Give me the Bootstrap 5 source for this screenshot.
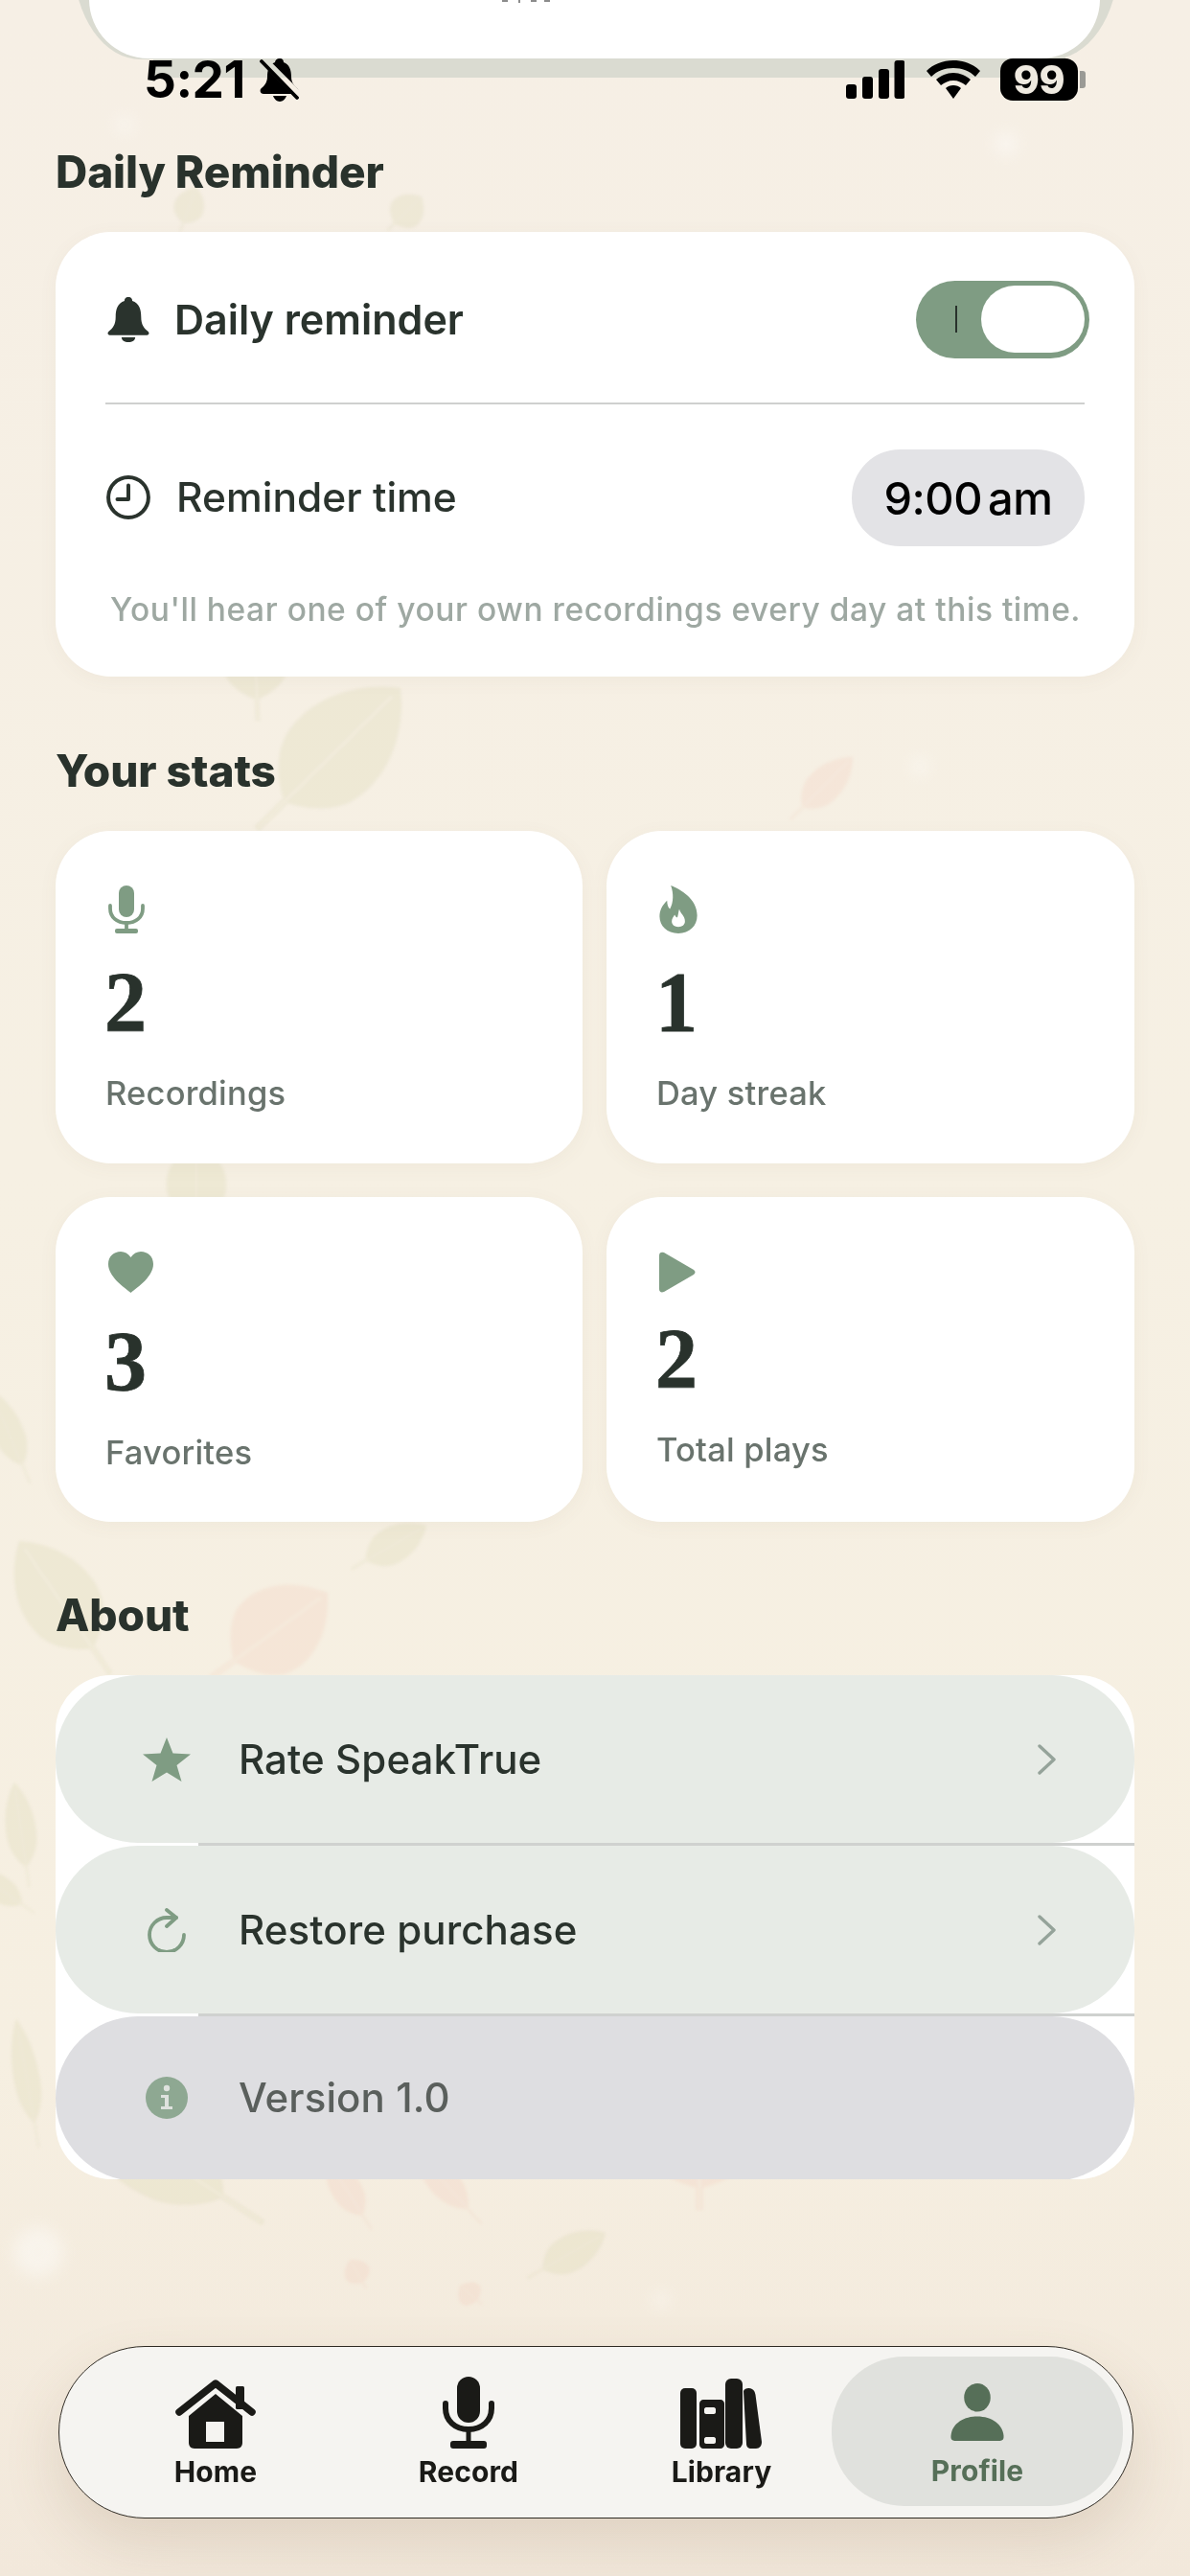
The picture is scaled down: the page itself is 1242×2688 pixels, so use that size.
<!DOCTYPE html>
<html lang="en">
<head>
<meta charset="utf-8">
<title>Profile</title>
<link rel="stylesheet" href="https://cdn.jsdelivr.net/npm/bootstrap@5.3.0/dist/css/bootstrap.min.css">
<style>
html,body{margin:0;background:#f6efe3}
body{font-family:"Inter","Liberation Sans",sans-serif;color:#2a332d}
.screen{position:relative;width:1242px;height:2688px;overflow:hidden;background:linear-gradient(180deg,#f6efe5 0%,#f6f0e3 45%,#f6efe1 80%,#f2e8db 100%);padding:0 58px}
.bg-art{position:absolute;inset:0;width:1242px;height:2688px}
.layer{position:relative}
.topzone{height:154px;position:relative;margin:0 -58px}
.sheet-back{position:absolute;left:77px;right:75px;top:-40px;height:102px;background:#dadbd1;border-radius:0 0 70px 70px/0 0 100px 100px}
.sheet-band{position:absolute;left:160px;right:130px;top:40px;height:41px;background:#dadbd1}
.sheet{position:absolute;left:93px;width:1055px;top:-60px;height:121px;background:#fff;border-radius:0 0 62px 62px}
.sheet-ink{position:absolute;left:448px;top:0;display:block}
.sbar{position:absolute;left:150px;top:58px;width:983px;height:50px}
.clock{font-size:53px;font-weight:700;line-height:50px;color:#000;letter-spacing:-.5px}
.belloff{margin-left:15px}
.wifi{margin:0 21px 0 23px}
.batt{width:81px;height:44px;background:#000;border-radius:13px;color:#efeae0;font-size:41px;font-weight:800;line-height:44px;text-align:center;letter-spacing:-.5px}
.batt-nub{width:6px;height:18px;background:#9a9a95;border-radius:0 3px 3px 0;margin-left:2px}
.sect-title{font-size:46px;font-weight:800;line-height:50px;margin:0 0 38px;color:#29322c;letter-spacing:-.1px}
.mt-sect{margin-top:73px}
.mt-about{margin-top:72px}
.rcard{background:#fff;border:0;border-radius:58px;box-shadow:0 4px 20px rgba(120,100,70,.05)}
.reminder{height:464px;padding:0 52px}
.rem-row{height:178px;padding-top:4px}
.rem-row.two{height:194px;padding-top:0}
.sep{height:2px;background:#cfd0cf}
.rem-label{font-size:43px;line-height:50px;font-weight:600;color:#2a332d}
.rem-label.med{font-size:42.500px;font-weight:550;margin-left:2px}
.w-ic{width:46px;flex:none;margin:0 25px 0 1px}
.toggle{position:relative;width:181px;height:81px;margin-right:-5px;background:#7f9c83;border-radius:41px}
.toggle-bar{position:absolute;left:41px;top:26px;width:2px;height:28px;background:#29322c}
.toggle-knob{position:absolute;right:5px;top:5px;width:108px;height:70px;background:#fff;border-radius:35px}
.timepill{width:243px;height:101px;background:#e3e3e6;border-radius:50px;font-size:47px;font-weight:500;color:#000;line-height:101px;text-align:center;letter-spacing:-.5px}
.timepill .ampm{margin-left:-6px}
.hint{font-size:33.500px;line-height:40px;font-weight:550;color:#9ea8a2;margin:0 0 0 5px;white-space:nowrap;letter-spacing:.54px}
.stats{display:grid;grid-template-columns:550px 551px;grid-template-rows:347px 339px;column-gap:25px;row-gap:35px}
.stat{padding:57px 0 0 52px}
.stat-ic{display:block;margin:0 0 29px 3px}
.stat-ic.tight{margin-bottom:26px}
.stat-num{font-family:"Liberation Serif",serif;font-size:88px;line-height:86px;font-weight:700;color:#29322c;margin:0 0 0 -1px;-webkit-text-stroke:.8px #29322c}
.stat-lab{font-size:34.500px;line-height:40px;font-weight:500;color:#69736d;margin:32px 0 0;letter-spacing:.2px}
.list{background:#fff;border-radius:58px;overflow:hidden;padding:0;margin:0;list-style:none;height:526px}
.lrow{height:175px;background:#e7ebe6;border-radius:86px;padding:0 82px 0 91px}
.lrow.ver{background:#dedee1;height:172px;padding-bottom:3px}
.lrow-line{height:3px;background:#cfd1cf;margin-left:149px}
.lrow-ic{width:50px;flex:none;margin-right:50px;display:flex;justify-content:center}
.lrow-txt{font-size:42px;line-height:50px;font-weight:550;color:#2a332d;letter-spacing:.1px}
.lrow.ver .lrow-txt{color:#5a5f5c;font-weight:500}
.tabbar{width:1122px;height:180px;margin:174px 0 0 3px;background:#f5f4f1;border:1.5px solid #2f2b24;border-radius:90px;padding:10px 10px 10px 50px;box-shadow:0 26px 60px rgba(125,95,60,.16)}
.tabgroup{gap:38px;padding-top:23px}
.tab{width:226px;text-align:center;color:#1a1a17}
.tab-ic{height:73px;display:flex;align-items:flex-end;justify-content:center}
.tab-lab{font-size:30px;line-height:36px;font-weight:700;margin-top:6px;letter-spacing:.1px}
.tab-on{width:304px;height:156px;margin-left:2px;background:#e0e1dd;border-radius:76px;color:#566f58;padding-top:28px;text-align:center}
.tab-on .tab-ic{height:60px}
.tab-on .tab-lab{margin-top:13px}
</style>
</head>
<body>
<div class="screen">
  <svg class="bg-art" viewBox="0 0 1242 2688" aria-hidden="true">
    <defs>
      <g id="lf">
        <path d="M0 0C35 30 52 75 42 115C34 140 12 155 3 160L3 200L-3 200L-3 160C-12 155-34 140-42 115C-52 75-35 30 0 0Z"/>
        <path d="M0 12V198" fill="none" stroke="#f7f1e4" stroke-width="2.500" opacity=".55"/>
      </g>
      <filter id="sft"><feGaussianBlur stdDeviation="1.500"/></filter>
      <filter id="glow"><feGaussianBlur stdDeviation="8"/></filter>
    </defs>
    <g fill="#fff" opacity=".4" filter="url(#glow)">
      <circle cx="1050" cy="150" r="12"/><circle cx="130" cy="130" r="9"/><circle cx="960" cy="800" r="9"/><circle cx="40" cy="2350" r="26"/><circle cx="690" cy="2400" r="8"/><circle cx="600" cy="2510" r="8"/>
    </g>
    <g filter="url(#sft)">
      <g fill="#c6c68c" opacity=".17">
        <use href="#lf" transform="translate(205 195) rotate(20) scale(.35 .25)"/>
        <use href="#lf" transform="translate(440 205) rotate(45) scale(.4 .25)"/>
        <use href="#lf" transform="translate(265 640) rotate(-2) scale(.75 .56)"/>
        <use href="#lf" transform="translate(418 718) rotate(45.600) scale(1.150 1.050)"/>
        <use href="#lf" transform="translate(205 1190) rotate(0) scale(.7 .5)"/>
        <use href="#lf" transform="translate(-10 1450) rotate(-23) scale(.35 .53)"/>
        <use href="#lf" transform="translate(445 1592) rotate(60) scale(.42 .45)"/>
        <use href="#lf" transform="translate(20 1608) rotate(-34.500) scale(.9 .84)"/>
        <use href="#lf" transform="translate(15 1860) rotate(-8) scale(.35 .55)"/>
        <use href="#lf" transform="translate(-30 1950) rotate(-55) scale(.3 .4)"/>
        <use href="#lf" transform="translate(17 2107) rotate(-10) scale(.3 .68)"/>
        <use href="#lf" transform="translate(60 2180) rotate(-57) scale(1 1.280)"/>
        <use href="#lf" transform="translate(632 2330) rotate(60) scale(.42 .47)"/>
      </g>
      <g fill="#eeb49e" opacity=".16">
        <use href="#lf" transform="translate(890 790) rotate(45) scale(.4 .46)"/>
        <use href="#lf" transform="translate(342 1662) rotate(54) scale(1 .75)"/>
        <use href="#lf" transform="translate(340 2250) rotate(-32) scale(.35 .45)"/>
        <use href="#lf" transform="translate(430 2240) rotate(-42) scale(.35 .54)"/>
        <use href="#lf" transform="translate(730 2190) rotate(0) scale(1.200 .58)"/>
        <use href="#lf" transform="translate(365 2358) rotate(-30) scale(.3 .17)"/>
        <use href="#lf" transform="translate(480 2385) rotate(-50) scale(.3 .15)"/>
      </g>
    </g>
  </svg>

  <div class="layer">
    <div class="topzone">
      <div class="sheet-back"></div>
      <div class="sheet-band"></div>
      <div class="sheet"></div>
      <svg class="sheet-ink" width="130" height="3" viewBox="0 0 130 3" fill="#8c8c8c"><rect x="93" width="2" height="3"/><rect x="106" width="6" height="2"/><rect x="120" width="6" height="2"/><rect x="76" width="6" height="2"/></svg>
      <div class="sbar d-flex align-items-center">
        <span class="clock">5:21</span>
        <svg class="belloff" width="41" height="45" viewBox="0 0 41 45" fill="#000">
          <defs><mask id="gap"><rect width="41" height="45" fill="#fff"/><path d="M-1 -3L39 37M2 -1L42 39" stroke="#000" stroke-width="7.500"/></mask></defs>
          <path mask="url(#gap)" d="M21 0C24 0 25 2 25 4C31 6 33 12 33 19C33 26 37 29 40 32C41 34 40 37 37 37H4C1 37 0 34 1 32C4 29 8 26 8 19C8 12 10 6 16 4C16 2 18 0 21 0Z"/>
          <path mask="url(#gap)" d="M14 39H28C27 42 24 45 21 45S15 42 14 39Z"/>
          <path d="M2 3L39 41" stroke="#000" stroke-width="3.800" stroke-linecap="round"/>
        </svg>
        <div class="ms-auto d-flex align-items-center">
          <svg width="61" height="40" viewBox="0 0 61 40" fill="#000"><rect y="25" width="11" height="15" rx="3"/><rect x="17" y="17" width="11" height="23" rx="3"/><rect x="34" y="9" width="11" height="31" rx="3"/><rect x="50.500" width="11" height="40" rx="3"/></svg>
          <svg class="wifi" width="56" height="40" viewBox="0 0 56 40" fill="#000"><path d="M28 0C39 0 49 4 56 11L51 17C45 11 37 8 28 8S11 11 5 17L0 11C7 4 17 0 28 0Z"/><path d="M28 13C35 13 41 16 46 20L41 26C37 23 33 21 28 21S19 23 15 26L10 20C15 16 21 13 28 13Z"/><path d="M28 26C31 26 34 27 36 29L28 40L20 29C22 27 25 26 28 26Z"/></svg>
          <div class="batt">99</div>
          <div class="batt-nub"></div>
        </div>
      </div>
    </div>

    <h2 class="sect-title">Daily Reminder</h2>
    <div class="card rcard reminder">
      <div class="rem-row d-flex align-items-center">
        <svg class="w-ic" height="47" viewBox="0 0 44 46" fill="#2a332d"><path d="M22 0c3 0 4 2 4 4c7 2 9 9 9 16c0 8 3 12 7 15c2 2 1 4-2 4H4c-3 0-4-2-2-4c4-3 7-7 7-15c0-7 2-14 9-16c0-2 1-4 4-4Z"/><path d="M15 41h14c0 3-3 5-7 5s-7-2-7-5Z"/></svg>
        <span class="rem-label">Daily reminder</span>
        <div class="toggle ms-auto"><span class="toggle-bar"></span><span class="toggle-knob"></span></div>
      </div>
      <div class="sep"></div>
      <div class="rem-row two d-flex align-items-center">
        <svg class="w-ic" height="46" viewBox="0 0 44 44" fill="none" stroke="#2a332d" stroke-width="3.800"><circle cx="22" cy="22" r="20"/><path d="M22 10V24H11" stroke-linecap="round" stroke-linejoin="round"/></svg>
        <span class="rem-label med">Reminder time</span>
        <div class="timepill ms-auto">9:00 <span class="ampm">am</span></div>
      </div>
      <p class="hint">You'll hear one of your own recordings every day at this time.</p>
    </div>

    <h2 class="sect-title mt-sect">Your stats</h2>
    <div class="stats">
      <div class="card rcard stat">
        <svg class="stat-ic" width="38" height="50" viewBox="0 0 38 50"><rect x="11" width="16" height="33" rx="8" fill="#7f9c83"/><path d="M2 21V24C2 33 9 39 19 39S36 33 36 24V21" fill="none" stroke="#7f9c83" stroke-width="3.800" stroke-linecap="round"/><path d="M19 39V46" stroke="#7f9c83" stroke-width="3.800"/><rect x="7" y="45" width="24" height="5" rx="2" fill="#7f9c83"/></svg>
        <p class="stat-num">2</p>
        <p class="stat-lab">Recordings</p>
      </div>
      <div class="card rcard stat">
        <svg class="stat-ic" width="41" height="50" viewBox="0 0 41 51"><path fill-rule="evenodd" fill="#7f9c83" d="M12 0C22 4 40 14 40 32C40 43 32 51 20 51S0 43 0 33C0 26 3 21 8 16C8 20 9 23 11 25C15 18 15 8 12 0ZM21 25C22 30 27 32 27 38C27 42 24 44 20 44S13 42 13 38C13 35 15 33 16 31C17 33 18 34 19 34C20 31 20 28 21 25Z"/></svg>
        <p class="stat-num">1</p>
        <p class="stat-lab">Day streak</p>
      </div>
      <div class="card rcard stat">
        <svg class="stat-ic" width="47" height="43" viewBox="0 0 47 43"><path fill="#7f9c83" d="M23.500 43C16 37 0 26 0 13C0 5 6 0 13 0C17 0 21 2 23.500 6C26 2 30 0 34 0C41 0 47 5 47 13C47 26 31 37 23.500 43Z"/></svg>
        <p class="stat-num">3</p>
        <p class="stat-lab">Favorites</p>
      </div>
      <div class="card rcard stat">
        <svg class="stat-ic tight" width="38" height="43" viewBox="0 0 38 43"><path fill="#7f9c83" d="M0 4C0 1 2 0 5 1L36 19C38 20.500 38 22.500 36 24L5 42C2 43 0 42 0 39Z"/></svg>
        <p class="stat-num">2</p>
        <p class="stat-lab">Total plays</p>
      </div>
    </div>

    <h2 class="sect-title mt-about">About</h2>
    <ul class="list">
      <li class="lrow d-flex align-items-center">
        <span class="lrow-ic"><svg width="50" height="46" viewBox="0 0 50 46"><path fill="#7f9c83" d="M25 0L31.500 16.500L50 17.500L35.500 29L40.500 46L25 36.500L9.500 46L14.500 29L0 17.500L18.500 16.500Z"/></svg></span>
        <span class="lrow-txt">Rate SpeakTrue</span>
        <svg class="ms-auto" width="19" height="32" viewBox="0 0 19 32" fill="none" stroke="#95a39a" stroke-width="3.400" stroke-linecap="round" stroke-linejoin="round"><path d="M2 2L17 16L2 30"/></svg>
      </li>
      <li class="lrow-line"></li>
      <li class="lrow d-flex align-items-center">
        <span class="lrow-ic"><svg width="40" height="46" viewBox="0 0 40 46" fill="none" stroke="#7f9c83" stroke-width="3.800" stroke-linecap="round" stroke-linejoin="round"><path d="M30 10H20A18 18 0 1 0 38 28"/><path d="M20 2L30 10L20 19"/></svg></span>
        <span class="lrow-txt">Restore purchase</span>
        <svg class="ms-auto" width="19" height="32" viewBox="0 0 19 32" fill="none" stroke="#95a39a" stroke-width="3.400" stroke-linecap="round" stroke-linejoin="round"><path d="M2 2L17 16L2 30"/></svg>
      </li>
      <li class="lrow-line"></li>
      <li class="lrow ver d-flex align-items-center">
        <span class="lrow-ic"><svg width="44" height="44" viewBox="0 0 44 44"><circle cx="22" cy="22" r="22" fill="#8ea892"/><circle cx="22" cy="12" r="3.200" fill="#dfe2de"/><path d="M16 19H24V31H28V34H16V31H20V22H16Z" fill="#dfe2de"/></svg></span>
        <span class="lrow-txt">Version 1.0</span>
      </li>
    </ul>

    <nav class="tabbar d-flex">
      <div class="tabgroup d-flex">
        <div class="tab">
          <div class="tab-ic"><svg width="84" height="72" viewBox="0 0 84 72" fill="#1a1a17"><path fill-rule="evenodd" d="M42 15L14 38V66C14 69 16 72 20 72H64C68 72 70 69 70 66V38ZM32 44H51V65H32Z"/><path d="M4 34L42 4L80 34" fill="none" stroke="#1a1a17" stroke-width="7.500" stroke-linecap="round" stroke-linejoin="round"/><rect x="63" y="7" width="9" height="24" rx="1.500"/></svg></div>
          <div class="tab-lab">Home</div>
        </div>
        <div class="tab">
          <div class="tab-ic"><svg width="54" height="75" viewBox="0 0 54 75" fill="#1a1a17"><rect x="15" width="24" height="48" rx="12"/><path d="M3 28V33C3 46 13 55 27 55S51 46 51 33V28" fill="none" stroke="#1a1a17" stroke-width="6" stroke-linecap="round"/><rect x="24.500" y="55" width="5" height="14"/><rect x="8" y="67" width="38" height="8" rx="3"/></svg></div>
          <div class="tab-lab">Record</div>
        </div>
        <div class="tab">
          <div class="tab-ic"><svg width="86" height="73" viewBox="0 0 86 73" fill="#1a1a17"><rect y="10" width="17" height="63" rx="5"/><path fill-rule="evenodd" d="M25 22H43C45 22 47 24 47 26V69C47 71 45 73 43 73H25C23 73 21 71 21 69V26C21 24 23 22 25 22ZM28 30C27 30 26 31 26 32V35C26 36 27 37 28 37H36C37 37 38 36 38 35V32C38 31 37 30 36 30ZM28 61C27 61 26 62 26 63V66C26 67 27 68 28 68H36C37 68 38 67 38 66V63C38 62 37 61 36 61Z" transform="translate(-1 0)"/><rect x="47" width="18" height="73" rx="6"/><path d="M66 13C67 10 72 9 75 11C77 12 78 14 78.500 17L85 66C85 70 83 73 79 73H74C71 73 69 71 69 68Z"/></svg></div>
          <div class="tab-lab">Library</div>
        </div>
      </div>
      <div class="tab-on">
        <div class="tab-ic"><svg width="56" height="60" viewBox="0 0 56 61" fill="#566f58"><ellipse cx="28" cy="15" rx="14" ry="15"/><path d="M0 57C0 44 12 35 28 35S56 44 56 57C56 59 55 61 52 61H4C1 61 0 59 0 57Z"/></svg></div>
        <div class="tab-lab">Profile</div>
      </div>
    </nav>
  </div>
</div>
<script src="https://cdn.jsdelivr.net/npm/bootstrap@5.3.0/dist/js/bootstrap.bundle.min.js"></script>
</body>
</html>
